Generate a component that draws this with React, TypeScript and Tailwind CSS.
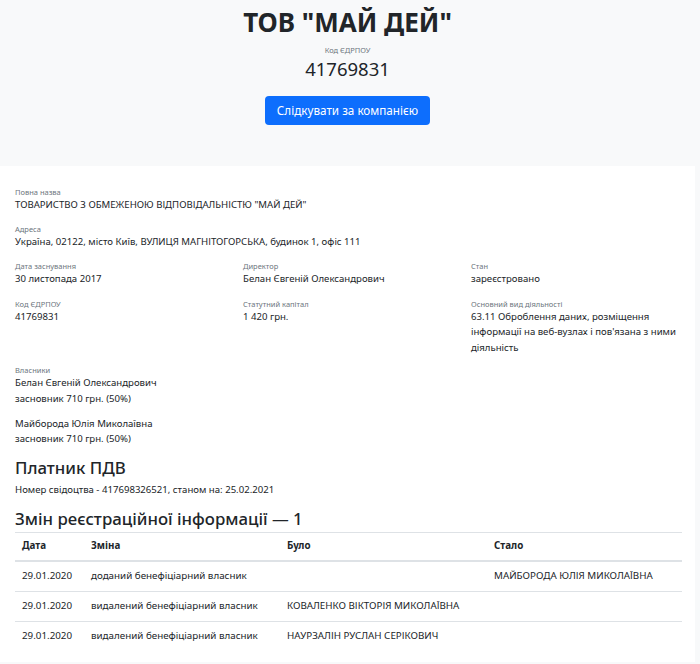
import React from "react";

const font = { fontFamily: '"Noto Sans", "Open Sans", sans-serif' };

function Field({ label, children }: { label: string; children: React.ReactNode }) {
  return (
    <div className="mb-[12.5px]">
      <div className="text-[7.5px] leading-[9px] text-[#6c757d]">{label}</div>
      <div className="text-[9.6px] leading-[15.7px] text-[#212529]">{children}</div>
    </div>
  );
}

const rows = [
  ["29.01.2020", "доданий бенефіціарний власник", "", "МАЙБОРОДА ЮЛІЯ МИКОЛАЇВНА"],
  ["29.01.2020", "видалений бенефіціарний власник", "КОВАЛЕНКО ВІКТОРІЯ МИКОЛАЇВНА", ""],
  ["29.01.2020", "видалений бенефіціарний власник", "НАУРЗАЛІН РУСЛАН СЕРІКОВИЧ", ""],
];

export default function App() {
  return (
    <div style={font} className="w-[700px] h-[664px] bg-[#f8f9fa] overflow-hidden text-[#212529]">
      <header className="w-[695px] h-[166px] flex flex-col items-center pt-[7px]">
        <h1 className="text-[26px] leading-[31px] font-bold text-[#212529]">ТОВ "МАЙ ДЕЙ"</h1>
        <div className="mt-[7px] text-[7.5px] leading-[10px] text-[#6c757d]">Код ЄДРПОУ</div>
        <div className="mt-[3px] text-[18.5px] leading-[22px]">41769831</div>
        <button className="mt-[16px] h-[29px] w-[165px] rounded-[4px] bg-[#0d6efd] text-white text-[11.7px]">
          Слідкувати за компанією
        </button>
      </header>
      <main className="w-[695px] h-[496px] bg-white px-[15px] pt-[22px]">
        <Field label="Повна назва">ТОВАРИСТВО З ОБМЕЖЕНОЮ ВІДПОВІДАЛЬНІСТЮ "МАЙ ДЕЙ"</Field>
        <Field label="Адреса">Україна, 02122, місто Київ, ВУЛИЦЯ МАГНІТОГОРСЬКА, будинок 1, офіс 111</Field>
        <div className="grid grid-cols-[228px_228px_210px]">
          <div>
            <Field label="Дата заснування">30 листопада 2017</Field>
            <Field label="Код ЄДРПОУ">41769831</Field>
          </div>
          <div>
            <Field label="Директор">Белан Євгеній Олександрович</Field>
            <Field label="Статутний капітал">1 420 грн.</Field>
          </div>
          <div>
            <Field label="Стан">зареєстровано</Field>
            <Field label="Основний вид діяльності">
              63.11 Оброблення даних, розміщення
              <br />
              інформації на веб-вузлах і пов'язана з ними
              <br />
              діяльність
            </Field>
          </div>
        </div>
        <div className="-mt-[2px]">
          <div className="text-[7.5px] leading-[9px] text-[#6c757d]">Власники</div>
          <div className="text-[9.6px] leading-[15.7px] mb-[9px]">
            <div>Белан Євгеній Олександрович</div>
            <div>засновник 710 грн. (50%)</div>
          </div>
          <div className="text-[9.6px] leading-[15.7px]">
            <div>Майборода Юлія Миколаївна</div>
            <div>засновник 710 грн. (50%)</div>
          </div>
        </div>
        <h2 className="mt-[10px] text-[16.8px] leading-[22px] font-medium">Платник ПДВ</h2>
        <div className="mt-[3px] text-[9.6px] leading-[15.7px]">Номер свідоцтва - 417698326521, станом на: 25.02.2021</div>
        <h2 className="mt-[10px] text-[16.8px] leading-[22px] font-medium">Змін реєстраційної інформації — 1</h2>
        <table className="w-[667px] mt-[2px] border-t border-[#dee2e6] text-[9.8px] table-fixed">
          <colgroup>
            <col className="w-[69px]" />
            <col className="w-[196px]" />
            <col className="w-[207px]" />
            <col />
          </colgroup>
          <thead>
            <tr className="border-b-2 border-[#dee2e6]">
              {["Дата", "Зміна", "Було", "Стало"].map((h) => (
                <th key={h} className="h-[29px] px-[7px] text-left font-bold">{h}</th>
              ))}
            </tr>
          </thead>
          <tbody>
            {rows.map((r, i) => (
              <tr key={i} className={i < rows.length - 1 ? "border-b border-[#dee2e6]" : ""}>
                {r.map((c, j) => (
                  <td key={j} className="h-[30px] px-[7px] whitespace-nowrap">{c}</td>
                ))}
              </tr>
            ))}
          </tbody>
        </table>
      </main>
    </div>
  );
}
